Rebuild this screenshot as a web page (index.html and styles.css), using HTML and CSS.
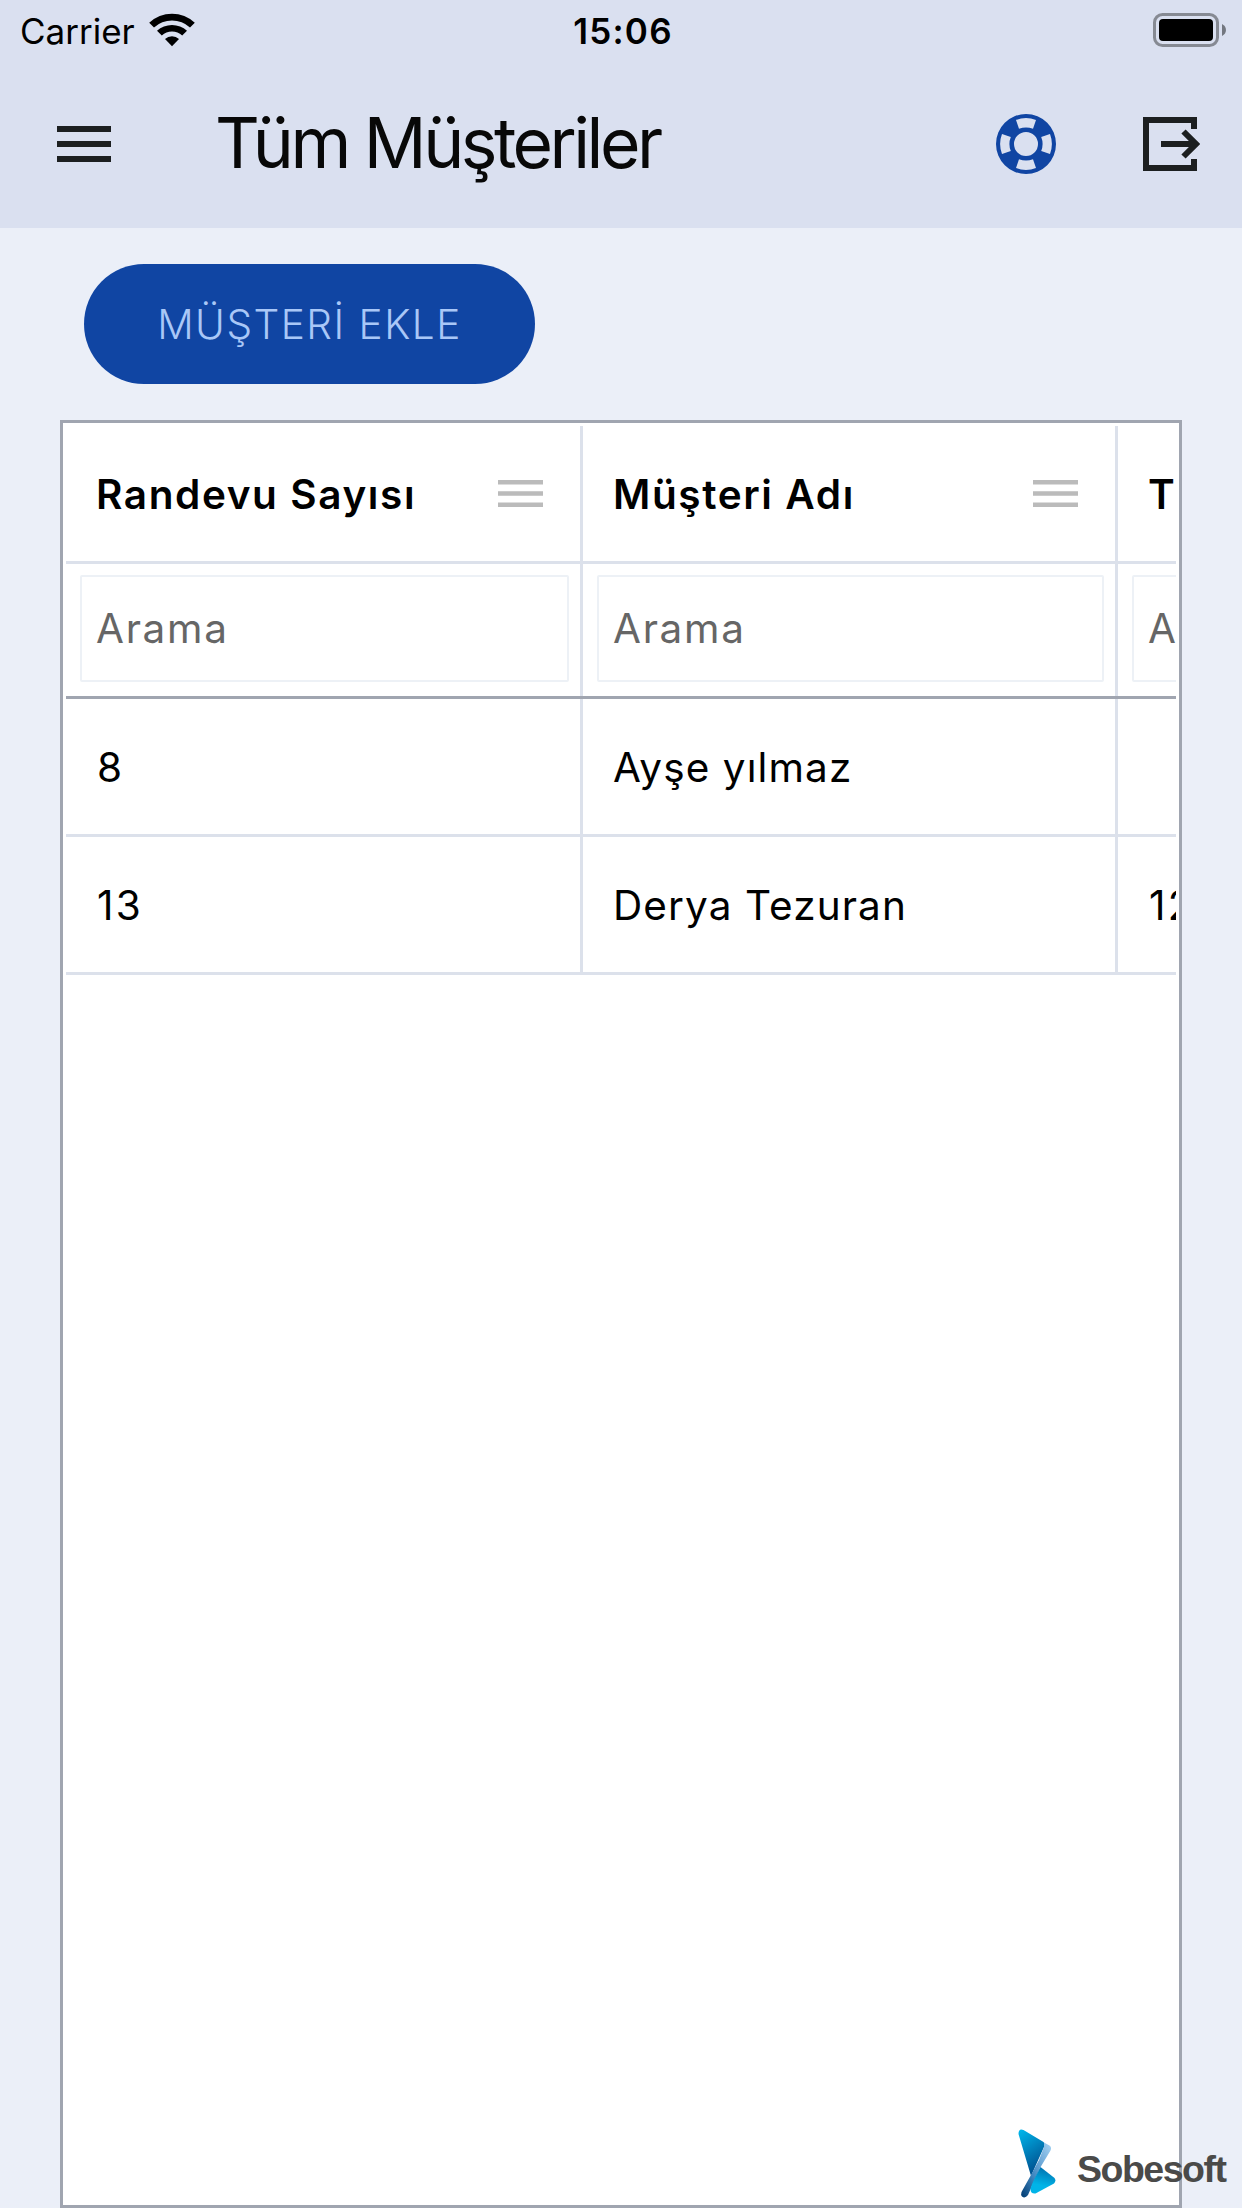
FILE: index.html
```html
<!DOCTYPE html>
<html lang="tr">
<head>
<meta charset="UTF-8">
<meta name="viewport" content="width=device-width, initial-scale=1.0">
<title>Tüm Müşteriler</title>
<link rel="stylesheet" href="styles.css">
</head>
<body>
<div class="app">
    <header class="header">
        <div class="status-bar">
            <div class="status-left">
                <span class="carrier">Carrier</span>
                <svg class="wifi" width="46" height="34" viewBox="0 0 46 34">
                    <path d="M0.2 9.800 A33 33 0 0 1 45.8 9.800 L41 14.600 A26.500 26.500 0 0 0 5 14.600 Z"/>
                    <path d="M8 17.800 A22 22 0 0 1 38 17.800 L33.200 22.600 A15 15 0 0 0 12.800 22.600 Z"/>
                    <path d="M16 26 A10.500 10.500 0 0 1 30 26 L23 33.200 Z"/>
                </svg>
            </div>
            <span class="clock">15:06</span>
            <div class="status-right">
                <svg class="battery" width="73" height="34" viewBox="0 0 73 34">
                    <rect class="battery-frame" x="1.5" y="1.5" width="63" height="31" rx="8"/>
                    <rect x="6" y="6" width="54" height="22" rx="4"/>
                    <path class="battery-cap" d="M69 11 C74.3 13.5 74.3 20.5 69 23 Z"/>
                </svg>
            </div>
        </div>
        <div class="toolbar">
            <svg class="menu-icon" width="54" height="36" viewBox="0 0 54 36">
                <path d="M0 0h54v6H0zM0 15h54v6H0zM0 30h54v6H0z"/>
            </svg>
            <h1 class="title">Tüm Müşteriler</h1>
            <svg class="help-icon" width="60" height="60" viewBox="-30 -30 60 60">
                <path fill-rule="evenodd" d="M-30 0a30 30 0 1 0 60 0a30 30 0 1 0 -60 0zM-12 0a12 12 0 1 0 24 0a12 12 0 1 0 -24 0z
                    M-10 -24Q0 -27.8 10 -24L7 -15.2Q0 -18 -7 -15.2zM-10 24Q0 27.8 10 24L7 15.2Q0 18 -7 15.2z
                    M-24 -10Q-27.8 0 -24 10L-15.2 7Q-18 0 -15.2 -7zM24 -10Q27.8 0 24 10L15.2 7Q18 0 15.2 -7z"/>
            </svg>
            <svg class="exit-icon" width="57" height="54" viewBox="0 0 57 54">
                <path d="M51 12V3H3V51H51V42M18 27H52M40.5 14.5L53 27L40.5 39.5"/>
            </svg>
        </div>
    </header>

    <main class="content">
        <button class="add-button">MÜŞTERİ EKLE</button>
        <div class="grid-panel">
            <div class="grid">
                <!-- baslik -->
                <div class="row row-head">
                    <div class="cell col1">
                        <span>Randevu Sayısı</span>
                        <svg class="col-menu" width="45" height="28" viewBox="0 0 45 28"><path d="M0 0h45v4.5H0zM0 11.3h45v4.5H0zM0 22.6h45v4.5H0z"/></svg>
                    </div>
                    <div class="cell col2">
                        <span>Müşteri Adı</span>
                        <svg class="col-menu" width="45" height="28" viewBox="0 0 45 28"><path d="M0 0h45v4.5H0zM0 11.3h45v4.5H0zM0 22.6h45v4.5H0z"/></svg>
                    </div>
                    <div class="cell col3"><span>T</span></div>
                </div>
                <!-- arama -->
                <div class="row row-filter">
                    <div class="cell col1"><input class="search" type="text" placeholder="Arama"></div>
                    <div class="cell col2"><input class="search" type="text" placeholder="Arama"></div>
                    <div class="cell col3"><input class="search" type="text" placeholder="Arama"></div>
                </div>
                <div class="row">
                    <div class="cell col1 number">8</div>
                    <div class="cell col2">Ayşe yılmaz</div>
                    <div class="cell col3"></div>
                </div>
                <div class="row">
                    <div class="cell col1 number">13</div>
                    <div class="cell col2">Derya Tezuran</div>
                    <div class="cell col3 number">12</div>
                </div>
            </div>
        </div>
    </main>

    <div class="brand">
        <svg class="brand-logo" width="38" height="70" viewBox="0 0 38 70">
            <defs>
                <linearGradient id="g1" x1="0" y1="0" x2="0.4" y2="1">
                    <stop offset="0" stop-color="#00b9ee"/>
                    <stop offset="1" stop-color="#00508f"/>
                </linearGradient>
                <linearGradient id="g2" x1="1" y1="0" x2="0" y2="1">
                    <stop offset="0" stop-color="#a5d3f3"/>
                    <stop offset="0.35" stop-color="#6fa9d8"/>
                    <stop offset="0.6" stop-color="#3f87c0"/>
                    <stop offset="1" stop-color="#003a70"/>
                </linearGradient>
                <linearGradient id="g3" x1="0.6" y1="0" x2="0.4" y2="1">
                    <stop offset="0" stop-color="#0070ae"/>
                    <stop offset="0.7" stop-color="#00b4e8"/>
                </linearGradient>
            </defs>
            <path fill="url(#g1)" d="M0.500 5Q0.500 -1 5.500 1L25.500 13Q27.500 15 26 18L13 47Z"/>
            <path fill="url(#g2)" d="M26 13.500L31.500 16.500Q34 18.500 32.500 21.500L22 39L10 66Q7 70 4 67.500Q2.500 66 3.500 63L13 46L21 31L26 18Z"/>
            <path fill="url(#g3)" d="M22.500 38L36.500 49Q38.500 52 36 54.500L17.500 64.500Q12.500 65 12.500 60Q13 56 22.500 38Z"/>
        </svg>
        <span class="brand-name">Sobesoft</span>
    </div>
</div>
</body>
</html>
```
FILE: styles.css
```css
*{
    box-sizing: border-box;
}
body{
    margin: 0;
    font-family: Inter, "Liberation Sans", sans-serif;
    background-color: #ebeff8;
}
.app{
    width: 1242px;
    height: 2208px;
    display: flex;
    flex-direction: column;
    position: relative; /* brand icin */
    overflow: hidden;
}
.header{
    height: 228px;
    background-color: #dae0f0;
}
/* status bar */
.status-bar{
    height: 60px;
    padding: 0 16px 0 20px;
    display: grid;
    grid-template-columns: 1fr auto 1fr;
    color: #000;
}
.status-left{
    display: flex;
    align-items: center;
    gap: 14px;
    height: 59px;
}
.carrier{
    font-size: 35px;
    line-height: 58px;
    padding-top: 3px;
}
.clock{
    font-size: 35px;
    font-weight: 600;
    line-height: 60px;
    padding-top: 1px;
    letter-spacing: 1.2px;
}
.status-right{
    display: flex;
    align-items: center;
    justify-content: flex-end;
}
.battery{
    margin-bottom: 1px;
}
.battery-frame{
    fill: none;
    stroke: #868a93;
    stroke-width: 3;
}
.battery-cap{
    fill: #737780;
}
/* toolbar */
.toolbar{
    height: 168px;
    padding: 0 42px 0 57px;
    display: flex;
    align-items: center;
}
.menu-icon{
    fill: #1c1f20;
}
.title{
    flex: 1;
    margin: 0 0 2px 104px;
    font-size: 69.5px;
    font-weight: 400;
    letter-spacing: -3.5px;
    color: #080808;
}
.help-icon{
    fill: #1045a3;
}
.exit-icon{
    margin-left: 87px;
    fill: none;
    stroke: #1c1f20;
    stroke-width: 6;
}
/* icerik */
.content{
    flex: 1;
    padding: 36px 60px 0;
    display: flex;
    flex-direction: column;
    align-items: flex-start;
}
.add-button{
    width: 451px;
    height: 120px;
    margin: 0 0 36px 24px;
    padding: 0;
    border: none;
    border-radius: 60px;
    background-color: #1045a3;
    color: #a9c7f7;
    font-family: inherit;
    font-size: 40.5px;
    font-weight: 350;
    letter-spacing: 1.5px;
}
.grid-panel{
    width: 1122px;
    flex: 1;
    padding: 3px;
    border: 3px solid #a0a5b0;
    background-color: #fff;
}
.grid{
    overflow: hidden;
    font-size: 40.5px;
    letter-spacing: 1.1px;
    color: #000;
}
.row{
    width: 1652px;
    height: 138px;
    display: flex;
    border-bottom: 3px solid #dce1eb;
}
.cell{
    height: 135px;
    padding: 2px 30px 0;
    display: flex;
    align-items: center;
    border-right: 3px solid #dce1eb;
    white-space: nowrap;
}
.col1{
    width: 517px;
}
.col2{
    width: 535px;
}
.col3{
    width: 600px;
}
.number{
    padding-left: 31px;
    letter-spacing: 2.4px;
}
.row-head .cell{
    justify-content: space-between;
    padding-right: 37px;
    font-weight: 600;
    letter-spacing: 1.6px;
}
.col-menu{
    fill: #bbb;
    margin-bottom: 2px;
}
.row-filter{
    height: 135px;
    border-bottom-color: #a0a5b0;
}
.row-filter .cell{
    height: 132px;
    padding: 0 11px 3px 14px;
}
.search{
    width: 100%;
    height: 107px;
    padding: 0 14px;
    border: 2px solid #edf1f6;
    border-radius: 2px;
    background: none;
    font-family: inherit;
    font-size: 40.5px;
    letter-spacing: 1.7px;
}
.search::placeholder{
    color: #666;
    opacity: 1;
}
/* sag alt logo */
.brand{
    position: absolute;
    left: 1018px;
    top: 2129px;
    display: flex;
    align-items: center;
    gap: 21px;
}
.brand-name{
    padding-top: 11px;
    font-family: "Liberation Sans", Arial, sans-serif;
    font-size: 37.5px;
    font-weight: 700;
    letter-spacing: -1.5px;
    color: #4a4a49;
}
```
